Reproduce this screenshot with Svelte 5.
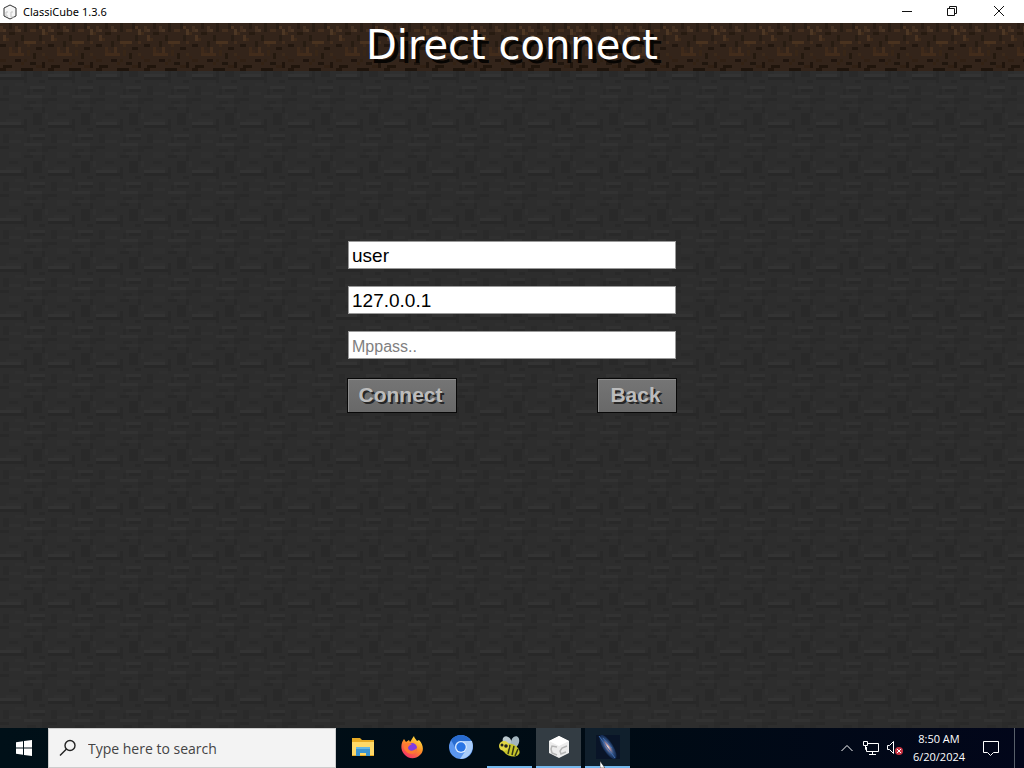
<script>
  let username = $state('user');
  let address = $state('127.0.0.1');
  let mppass = $state('');
  let query = $state('');

  // Texture cells: [column, row, width, height, shade]
  const stone = [
    [0,1,7,1,'#333333'],[0,2,8,1,'#282828'],[8,0,1,4,'#292929'],[11,0,3,2,'#292929'],
    [2,0,5,1,'#2f2f2f'],[13,3,2,1,'#292929'],[10,5,5,1,'#323232'],[11,6,4,1,'#292929'],
    [9,6,1,3,'#2a2a2a'],[1,5,2,3,'#2a2a2a'],[3,7,4,1,'#303030'],[8,8,6,1,'#323232'],
    [0,9,3,1,'#292929'],[14,9,2,2,'#2a2a2a'],[3,11,4,2,'#2f2f2f'],[8,12,3,1,'#292929'],
    [10,11,4,1,'#303030'],[14,12,1,2,'#292929'],[15,14,1,2,'#303030'],[3,14,3,1,'#2a2a2a'],
    [11,14,3,2,'#292929'],[5,4,3,1,'#2f2f2f'],[9,10,3,1,'#2a2a2a']
  ];
  const dirt = [
    [0,1,1,2,'#432f20'],[1,2,1,1,'#4b3524'],[3,0,1,2,'#281c13'],[5,1,1,2,'#453122'],[6,2,1,1,'#4b3625'],
    [8,0,1,3,'#281d14'],[10,2,2,1,'#432e1e'],[12,0,1,2,'#281d15'],[13,1,1,1,'#4a3422'],[14,2,1,2,'#4d3724'],
    [15,3,1,1,'#3f2b1b'],[1,4,1,2,'#4a3321'],[2,5,1,1,'#3e2a1a'],[3,3,2,1,'#271b11'],[7,4,1,2,'#271c12'],
    [8,6,4,1,'#49321f'],[9,7,1,1,'#3c291a'],[5,6,1,2,'#271c12'],[13,4,1,2,'#281d14'],[14,6,1,1,'#422d1d'],
    [0,7,2,1,'#22170f'],[3,8,1,2,'#3f2a1a'],[4,9,1,1,'#38261a'],[6,8,1,2,'#442e1d'],[3,10,5,1,'#422c1b'],
    [9,9,1,2,'#382617'],[12,8,2,1,'#22170f'],[11,10,1,2,'#24190f'],[14,10,1,1,'#3b291a'],[15,11,1,1,'#352317'],
    [0,12,2,1,'#302014'],[1,14,3,1,'#20150c'],[5,12,2,1,'#20150e'],[7,13,1,1,'#332214'],[8,12,1,1,'#302114'],
    [10,13,2,1,'#20160e'],[12,14,2,1,'#302014'],[14,13,1,2,'#20150d'],[0,15,2,1,'#22160d'],[7,15,4,1,'#1e140c']
  ];
</script>

<svelte:head><title>ClassiCube 1.3.6</title></svelte:head>

{#snippet texture(id, base, cells)}
  <svg class="texture" aria-hidden="true">
    <defs>
      <pattern {id} width="48" height="48" patternUnits="userSpaceOnUse">
        <rect width="48" height="48" fill={base} />
        {#each cells as [x, y, w, h, color]}
          <rect x={x * 3} y={y * 3} width={w * 3} height={h * 3} fill={color} />
        {/each}
      </pattern>
    </defs>
    <rect width="100%" height="100%" fill="url(#{id})" />
  </svg>
{/snippet}

<div class="desktop">
  <header class="titlebar">
    <svg class="app-icon" viewBox="0 0 16 16" aria-hidden="true">
      <path d="M8 1l6 3v8l-6 3-6-3V4z" fill="#f6f6f6" stroke="#333" />
      <path d="M6 8H4v4h2m5-4H9v5h3" fill="none" stroke="#c5c5c5" />
    </svg>
    <span class="caption">ClassiCube 1.3.6</span>
    <button aria-label="Minimize"><svg viewBox="0 0 12 12"><path d="M1 6.500h10" /></svg></button>
    <button aria-label="Restore"><svg viewBox="0 0 12 12"><path d="M1.500 3.500h7v7h-7zM3.500 3.500v-2h7v7h-2" /></svg></button>
    <button aria-label="Close"><svg viewBox="0 0 12 12"><path d="M1 1l10 10M11 1L1 11" /></svg></button>
  </header>

  <main>
    <div class="banner">
      {@render texture('dirt', '#33241a', dirt)}
      <h1>Direct connect</h1>
    </div>
    <div class="scene">
      {@render texture('stone', '#2d2d2d', stone)}
      <form onsubmit={(event) => event.preventDefault()}>
        <input type="text" aria-label="Username" bind:value={username} />
        <input type="text" aria-label="IP address and port" bind:value={address} />
        <input type="text" aria-label="Mppass" placeholder="Mppass.." bind:value={mppass} />
        <div class="actions">
          <button type="submit">Connect</button>
          <button type="button">Back</button>
        </div>
      </form>
    </div>
  </main>

  <footer class="taskbar">
    <button class="start" aria-label="Start">
      <svg width="16" height="16" viewBox="0 0 16 16" fill="#fff"><path d="M0 2.200l7-1v6.300H0zM8 1l8-1v7.500H8zM0 8.500h7v6.300l-7-1zM8 8.500h8V16l-8-1z" /></svg>
    </button>
    <label class="search">
      <svg width="18" height="18" viewBox="0 0 18 18" fill="none" stroke="#222" stroke-width="1.400"><circle cx="11" cy="6.500" r="5" /><path d="M7.500 10L1 16.500" /></svg>
      <input type="text" aria-label="Type here to search" placeholder="Type here to search" bind:value={query} />
    </label>
    <nav aria-label="Taskbar apps">
      <button aria-label="File Explorer">
        <svg viewBox="0 0 24 24"><path d="M1 3h8l2 2h12v16H1z" fill="#e8ab25" /><path d="M1 7h22v13H1z" fill="#ffd968" /><path d="M5 21v-8h14v8h-4v-3H9v3z" fill="#3c94d0" /><path d="M5 12h14v2H5z" fill="#66b7e4" /></svg>
      </button>
      <button aria-label="Firefox">
        <svg viewBox="0 0 24 24">
          <defs><linearGradient id="flame" x1="0.800" y1="0" x2="0.200" y2="1"><stop offset="0" stop-color="#ffec45" /><stop offset="0.450" stop-color="#ff9027" /><stop offset="1" stop-color="#f5246e" /></linearGradient></defs>
          <path d="M4 4l2 3 3-2 1 2c1-1 2-4 4-6 0 2 2 3 3 5l2-1c5 5 5 12 1 15-5 5-12 4-16-1C0 14 1 8 4 4z" fill="url(#flame)" />
          <circle cx="12" cy="13" r="5" fill="#823be0" /><path d="M4 10c3-3 6-2 8-1-2 1-4 2-4 4 1 4 6 3 9 0 0 5-5 7-9 5-3-2-5-5-4-8z" fill="#ff7a32" />
        </svg>
      </button>
      <button aria-label="Chromium">
        <svg viewBox="0 0 24 24"><circle cx="12" cy="12" r="12" fill="#5b96ef" /><path d="M2 5a12 12 0 0 1 20 1H12c-5 0-7 4-5 8z" fill="#286bcf" /><path d="M12 6h11c3 9-3 18-12 18l6-9c2-4 0-8-5-9z" fill="#a9cdfb" /><circle cx="12" cy="12" r="6" fill="#d9e9ff" /><circle cx="12" cy="12" r="4.700" fill="#2874e5" /></svg>
      </button>
      <button class="running" aria-label="Bee">
        <svg viewBox="0 0 24 24"><ellipse cx="9" cy="6" rx="4" ry="5" transform="rotate(-38 9 6)" fill="#bac7cd" /><ellipse cx="17" cy="7" rx="4" ry="6" transform="rotate(18 17 7)" fill="#a3b5bf" /><ellipse cx="13" cy="15" rx="9" ry="6" transform="rotate(24 13 15)" fill="#c7c52b" /><path d="M12 10l-2 9m6-8l-2 9m6-6l-3 7" stroke="#303419" stroke-width="1.500" /><circle cx="6" cy="11" r="5" fill="#e1d643" /><circle cx="4" cy="10" r="1.500" fill="#222" /><circle cx="8" cy="11" r="1.800" fill="#222" /></svg>
      </button>
      <button class="running active" aria-label="ClassiCube">
        <svg viewBox="0 0 24 24"><path d="M12 1l10 5v12l-10 5-10-5V6z" fill="#ececec" /><path d="M2 6l10 5 10-5-10-5z" fill="#fff" /><path d="M10 12l-5-1-1 3 1 4 5 2m10-9l-5 2-2 3 1 3 5-2" fill="none" stroke="#b5b5b5" stroke-width="1.500" /></svg>
      </button>
      <button class="running open" aria-label="Galaxy">
        <svg viewBox="0 0 24 24">
          <defs><radialGradient id="galaxy"><stop offset="0" stop-color="#ffe6d6" /><stop offset="0.250" stop-color="#a98d9e" /><stop offset="0.600" stop-color="#315080" /><stop offset="1" stop-color="#10264b" /></radialGradient></defs>
          <path d="M0 0h24v24H0z" fill="#091427" /><ellipse cx="12" cy="12" rx="5" ry="14" transform="rotate(-32 12 12)" fill="url(#galaxy)" /><path d="M3 1l7 10 9 12M7 3l9 10" stroke="#3d6baf" fill="none" />
        </svg>
      </button>
      <svg class="cursor" viewBox="0 0 5 7" aria-hidden="true"><path d="M0 0v7h5z" fill="#fff" stroke="#111" stroke-width="0.500" /></svg>
    </nav>
    <div class="tray">
      <button aria-label="Show hidden icons"><svg width="14" height="10" viewBox="0 0 14 10"><path d="M1.500 8L7 2.500 12.500 8" /></svg></button>
      <button aria-label="Network"><svg width="18" height="16" viewBox="0 0 18 16"><path d="M5 3.500h11.500v8H4.500V7M10.500 11.500v3M7 14.500h7M1.500 1.500h4v4h-4zM3.500 5.500v4h1" /></svg></button>
      <button aria-label="Volume muted"><svg width="18" height="16" viewBox="0 0 18 16"><path d="M1.500 5.500h2l4-4v12l-4-4h-2z" /><circle cx="13" cy="11" r="4" fill="#c93443" stroke="none" /><path d="M11 9l4 4m0-4l-4 4" /></svg></button>
      <button class="clock"><time datetime="2024-06-20T08:50">8:50 AM<br />6/20/2024</time></button>
      <button class="notifications" aria-label="Notifications"><svg width="18" height="18" viewBox="0 0 18 18"><path d="M1.500 2.500h15v11h-5l-3 3-3-3h-4z" /></svg></button>
      <button class="show-desktop" aria-label="Show desktop"></button>
    </div>
  </footer>
</div>

<style>
  :global(body) { margin: 0; }
  .desktop { min-height: 100vh; display: flex; flex-direction: column; font-family: "Open Sans", "Noto Sans", sans-serif; }
  button { border: 0; margin: 0; padding: 0; background: none; color: inherit; font: inherit; display: flex; align-items: center; justify-content: center; }
  .titlebar { height: 23px; background: #fff; display: flex; align-items: stretch; color: #000; }
  .app-icon { width: 16px; height: 16px; align-self: center; margin: 0 5px 0 2px; }
  .caption { flex: 1; font: 11px/23px "Noto Sans", sans-serif; }
  .titlebar button { width: 45px; padding-bottom: 2px; }
  .titlebar button:last-child { width: 50px; }
  .titlebar button svg { width: 12px; height: 12px; fill: none; stroke: #111; }
  main { flex: 1; display: flex; flex-direction: column; }
  .banner, .scene { position: relative; isolation: isolate; }
  .texture { position: absolute; inset: 0; width: 100%; height: 100%; z-index: -1; }
  .banner { height: 48px; }
  h1 { margin: 0; text-align: center; color: #fff; font: 40px/44px "DejaVu Sans", sans-serif; text-shadow: 4px 4px 0 #070503; }
  .scene { flex: 1; display: flex; align-items: flex-start; justify-content: center; }
  form { width: 330px; margin-top: 170px; display: flex; flex-direction: column; gap: 17px; font-family: "Liberation Sans", Arial, sans-serif; }
  form input { box-sizing: border-box; height: 28px; margin: 0 1px; padding: 2px 3px 0; border: 1px solid #999; background: #fff; color: #000; font: 19px "Liberation Sans", Arial, sans-serif; outline: 0; }
  form input::placeholder { color: #808080; opacity: 1; font-size: 16px; }
  .actions { display: flex; justify-content: space-between; padding-top: 2px; }
  .actions button { width: 110px; height: 35px; padding: 0 3px 2px 0; border: 1px solid #080808; background: linear-gradient(#757575, #686868); box-shadow: inset 1px 1px #8b8b8b; color: #bcbcbc; font-size: 21px; font-weight: 700; text-shadow: 2px 2px #262626; }
  .actions button + button { width: 80px; }
  .taskbar { height: 40px; background: linear-gradient(90deg, #001018, #000b14 60%, #02061a); display: flex; color: #fff; }
  .start { width: 48px; }
  .search { box-sizing: border-box; width: 288px; background: #f3f3f3; border: 1px solid #ccc; display: flex; align-items: center; gap: 11px; padding: 0 10px; }
  .search input { flex: 1; min-width: 0; padding: 0; border: 0; outline: 0; background: none; color: #222; font: 14px "Open Sans", sans-serif; }
  .search input::placeholder { color: #444; opacity: 1; }
  nav { position: relative; display: flex; padding-left: 2px; }
  nav button { width: 49px; box-sizing: border-box; border-bottom: 2px solid transparent; }
  nav button svg { width: 24px; height: 24px; }
  nav .running { width: 45px; margin: 0 2px; border-bottom-color: #76b9ed; }
  nav .active { background-color: #333c43; }
  nav .open { background-color: #101f2c; }
  .cursor { position: absolute; left: 264px; bottom: 0; width: 5px; height: 7px; }
  .tray { margin-left: auto; display: flex; }
  .tray button { width: 24px; }
  .tray svg { fill: none; stroke: #fff; stroke-width: 1; }
  .tray .clock { width: 64px; font-size: 11px; line-height: 18px; text-align: center; }
  .tray .notifications { width: 40px; }
  .tray .show-desktop { width: 13px; }
  .tray .show-desktop::before { content: ""; align-self: stretch; width: 1px; margin-right: 6px; background: #59606a; }
</style>
